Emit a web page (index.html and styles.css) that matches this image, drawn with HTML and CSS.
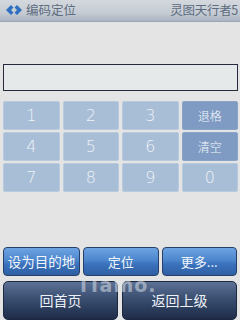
FILE: index.html
```html
<!DOCTYPE html>
<html>
<head>
<meta charset="utf-8">
<link rel="stylesheet" href="styles.css">
</head>
<body>
<div class="screen">
  <div class="header">
    <div class="title">
      <svg class="logo" width="18" height="12" viewBox="0 0 18 12">
        <path d="M6 1 L1 6 L6 11 L8.5 8.5 L6 6 L8.5 3.5 Z" fill="#2f6fc0"/>
        <path d="M12 1 L17 6 L12 11 L9.5 8.5 L12 6 L9.5 3.5 Z" fill="#2f6fc0"/>
      </svg>
      <span>编码定位</span>
    </div>
    <div class="brand">灵图天行者5</div>
  </div>
  <div class="input"></div>
  <div class="keypad">
    <div class="key">1</div>
    <div class="key">2</div>
    <div class="key">3</div>
    <div class="key dark cn">退格</div>
    <div class="key">4</div>
    <div class="key">5</div>
    <div class="key">6</div>
    <div class="key dark cn">清空</div>
    <div class="key">7</div>
    <div class="key">8</div>
    <div class="key">9</div>
    <div class="key">0</div>
  </div>
  <div class="spacer"></div>
  <div class="actions">
    <div class="btn">设为目的地</div>
    <div class="btn">定位</div>
    <div class="btn">更多...</div>
  </div>
  <div class="nav">
    <div class="nbtn">回首页</div>
    <div class="nbtn">返回上级</div>
  </div>
  <div class="watermark">ITamo.</div>
</div>
</body>
</html>
```
FILE: styles.css
```css
* { box-sizing: border-box; }
html, body { margin: 0; padding: 0; }
body {
  width: 240px;
  height: 320px;
  overflow: hidden;
  font-family: "Noto Sans CJK SC", "Noto Sans", sans-serif;
}
.screen {
  position: relative;
  width: 240px;
  height: 320px;
  display: flex;
  flex-direction: column;
  background: #e3e4e3;
  overflow: hidden;
}
.header {
  height: 22px;
  display: flex;
  align-items: center;
  justify-content: space-between;
  padding: 0 2px 1px 5px;
  background: linear-gradient(#d4d8de 0%, #c6ccd4 60%, #aab4c2 100%);
  border-bottom: 1px solid #9aa6b6;
  color: #5d6c80;
  font-size: 12.5px;
  line-height: 1;
}
.title { display: flex; align-items: center; gap: 3px; }
.logo { display: block; }
.brand { letter-spacing: -0.3px; }
.input {
  margin: 42px 2px 0 3px;
  height: 28px;
  border: 1px solid #262a3c;
  background: #e6e9ea;
}
.keypad {
  margin: 10px 2px 0 3px;
  display: grid;
  grid-template-columns: repeat(4, 1fr);
  grid-auto-rows: 29px;
  column-gap: 3px;
  row-gap: 2px;
}
.key {
  display: flex;
  align-items: center;
  justify-content: center;
  background: #a8bdd6;
  border: 1px solid #b8cadd;
  border-radius: 2px;
  color: #eef3f8;
  font-family: "DejaVu Sans", sans-serif;
  font-size: 16px;
  font-weight: 300;
}
.key.dark {
  background: #7f9bc3;
  border-color: #8aa4c8;
}
.key.cn {
  font-family: "Noto Sans CJK SC", sans-serif;
  font-size: 12px;
  color: #f4f7fb;
}
.spacer { height: 56px; }
.actions {
  display: flex;
  gap: 3px;
  padding: 0 3px 0 3px;
  height: 29px;
}
.btn {
  flex: 1;
  display: flex;
  align-items: center;
  justify-content: center;
  border-radius: 4px;
  border: 1px solid #26406a;
  background: linear-gradient(#6ea4e2 0%, #4c86cc 45%, #3a72bc 60%, #2f5fa4 100%);
  color: #f2f6fb;
  font-size: 13px;
}
.btn:first-child { flex: 0 0 77px; font-size: 13.5px; }
.nav {
  margin-top: 5px;
  display: flex;
  gap: 4px;
  padding: 0 3px;
  height: 40px;
}
.nbtn {
  flex: 1;
  display: flex;
  align-items: center;
  justify-content: center;
  border-radius: 5px;
  border: 1px solid #1c2740;
  background: linear-gradient(#5c7194 0%, #3d5274 40%, #2a3b5a 75%, #1f2c48 100%);
  color: #eef2f8;
  font-size: 14px;
}
.watermark {
  position: absolute;
  left: 80px;
  top: 274px;
  font-family: "DejaVu Sans", sans-serif;
  font-weight: bold;
  font-size: 19px;
  color: rgba(225, 230, 238, 0.5);
  letter-spacing: 1px;
}
```
